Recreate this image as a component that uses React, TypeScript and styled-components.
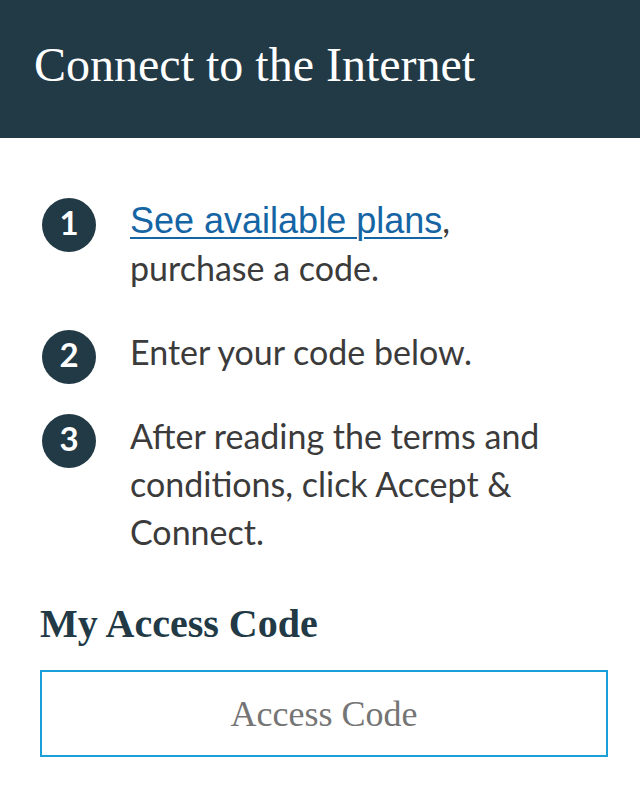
import React from "react";
import styled, { createGlobalStyle } from "styled-components";

const GlobalStyle = createGlobalStyle`
  html, body {
    margin: 0;
    padding: 0;
    background: #ffffff;
  }
  body {
    font-family: "Lato", "Noto Sans", sans-serif;
  }
`;

const Page = styled.div`
  width: 640px;
  min-height: 786px;
  background: #ffffff;
`;

const Header = styled.header`
  height: 138px;
  background: #223a46;
  display: flex;
  align-items: center;
  padding: 0 34px;
  box-sizing: border-box;
`;

const Title = styled.h1`
  margin: 0 0 8px 0;
  font-family: "Liberation Serif", "Times New Roman", serif;
  font-weight: normal;
  font-size: 48px;
  line-height: 56px;
  color: #ffffff;
`;

const Content = styled.main`
  padding: 58px 32px 0 40px;
  box-sizing: border-box;
`;

const Steps = styled.ol`
  list-style: none;
  margin: 0;
  padding: 0;
  display: flex;
  flex-direction: column;
  gap: 36px;
`;

const Step = styled.li`
  display: flex;
  align-items: flex-start;
  gap: 34px;
`;

const Badge = styled.span`
  flex: 0 0 54px;
  width: 54px;
  height: 54px;
  margin: 2px 0 -8px 2px;
  border-radius: 50%;
  background: #223a46;
  color: #ffffff;
  display: flex;
  align-items: center;
  justify-content: center;
  font-family: "Lato", "Noto Sans", sans-serif;
  font-weight: 700;
  font-size: 33px;
  line-height: 1;
  padding-bottom: 5px;
  box-sizing: border-box;
`;

const StepText = styled.p`
  margin: 0;
  font-family: "Lato", "Noto Sans", sans-serif;
  font-size: 34px;
  line-height: 48px;
  color: #3b3b3b;
`;

const Link = styled.a`
  font-family: "Liberation Sans", Arial, sans-serif;
  font-size: 36px;
  line-height: 1;
  color: #1565a5;
  text-decoration: underline;
  text-decoration-thickness: 2px;
  text-underline-offset: 4px;
`;

const SectionTitle = styled.h2`
  margin: 45px 0 0 0;
  font-family: "Liberation Serif", "Times New Roman", serif;
  font-weight: 700;
  font-size: 40px;
  line-height: 46px;
  color: #223a46;
`;

const CodeInput = styled.input`
  display: block;
  margin-top: 23px;
  width: 568px;
  height: 87px;
  box-sizing: border-box;
  border: 2px solid #1a9fdb;
  border-radius: 0;
  outline: none;
  background: #ffffff;
  text-align: center;
  font-family: "Liberation Serif", "Times New Roman", serif;
  font-size: 36px;
  color: #333333;
  &::placeholder {
    color: #757575;
    opacity: 1;
  }
`;

export default function App() {
  return (
    <Page>
      <GlobalStyle />
      <Header>
        <Title>Connect to the Internet</Title>
      </Header>
      <Content>
        <Steps>
          <Step>
            <Badge>1</Badge>
            <StepText>
              <Link href="#">See available plans</Link>,
              <br />
              purchase a code.
            </StepText>
          </Step>
          <Step>
            <Badge>2</Badge>
            <StepText>Enter your code below.</StepText>
          </Step>
          <Step>
            <Badge>3</Badge>
            <StepText>
              After reading the terms and conditions, click Accept &amp; Connect.
            </StepText>
          </Step>
        </Steps>
        <SectionTitle>My Access Code</SectionTitle>
        <CodeInput type="text" placeholder="Access Code" />
      </Content>
    </Page>
  );
}
